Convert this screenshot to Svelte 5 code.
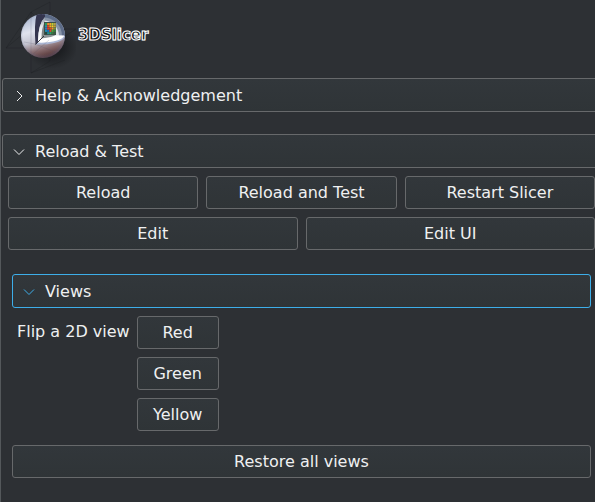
<script>
  let open = $state({ help: false, reload: true, views: true });
  const flips = ['Red', 'Green', 'Yellow'];
  const cells = [
    ['#2f9a58', '#f08a28', '#f6a423', '#b9cf35', '#b3a04a'],
    ['#2196a8', '#ef3e1c', '#f5b321', '#f7cf2c', '#c4a13a'],
    ['#3277c2', '#ee3b20', '#ec4a22', '#f49a25', '#7c9a3c'],
    ['#1b8fb0', '#1c6fc0', '#e4452a', '#54a53d', '#38813f'],
    ['#26483f', '#1e8f96', '#2aa36b', '#37803c', '#3d5a44']
  ];
</script>

{#snippet chevron(expanded)}
  <svg class="chevron" viewBox="0 0 12 12" aria-hidden="true">
    <path d={expanded ? 'M1 3.5L6 8.5L11 3.5' : 'M4 1L9 6L4 11'} />
  </svg>
{/snippet}

<main>
  <header>
    <svg class="logo" viewBox="0 0 76 76" aria-hidden="true">
      <defs>
        <linearGradient id="ball" x1="0.3" y1="0" x2="0.6" y2="1">
          <stop offset="0" stop-color="#a9b6d0" />
          <stop offset="0.35" stop-color="#e0e3ed" />
          <stop offset="0.58" stop-color="#c4c4d0" />
          <stop offset="0.8" stop-color="#84686b" />
          <stop offset="1" stop-color="#4c2a2b" />
        </linearGradient>
        <radialGradient id="edge" cx="0.48" cy="0.48" r="0.54">
          <stop offset="0.8" stop-color="#5c6c92" stop-opacity="0" />
          <stop offset="1" stop-color="#5c6c92" stop-opacity="0.4" />
        </radialGradient>
        <radialGradient id="shade">
          <stop offset="0.4" stop-color="#17191c" stop-opacity="0.75" />
          <stop offset="1" stop-color="#17191c" stop-opacity="0" />
        </radialGradient>
        <linearGradient id="side" x1="0" y1="0" x2="0" y2="1">
          <stop offset="0" stop-color="#8a94a0" />
          <stop offset="0.4" stop-color="#e8ebed" />
          <stop offset="1" stop-color="#ffffff" />
        </linearGradient>
      </defs>
      <ellipse cx="52" cy="47" rx="26" ry="22" fill="url(#shade)" />
      <path class="guide" d="M50 2V61L31 73V12L50 2M6 48L31 12M6 48H47L76 29H54M6 48L29 29M31 73L65 60M31 12L50 32" />
      <circle cx="43" cy="36" r="22" fill="url(#ball)" />
      <circle cx="43" cy="36" r="22" fill="url(#edge)" />
      <path d="M43 14A22 22 0 0 1 65 36H43Z" fill="#5d6c88" />
      <path d="M43 17.500A18.500 18.500 0 0 1 62 36H43Z" fill="#8794a8" />
      <path d="M43 20.500A15.500 15.500 0 0 1 59 36H43Z" fill="#dfe3e7" />
      <path d="M36.500 15Q40 13.500 45 14.500V17Q38.500 23 38 41.500L35.500 44.500Q34 24 36.500 15Z" fill="#34354e" />
      <path d="M45 17Q38 24 38 41.500L45 35Z" fill="url(#side)" />
      <path d="M45 22Q41.500 27 41.500 38.500L45 35Z" fill="#7e8584" />
      <path d="M35.500 44.500L45 35L65 36Q64.500 40.500 54 43Q46 45 35.500 44.500Z" fill="#aab6d4" />
      <path d="M37.500 42.500L45 35L64.500 35.500Q62 40 53 41.500Q46 43 37.500 42.500Z" fill="#ffffff" />
      <path d="M41.500 38.500L45 34.500H56Q54 36.500 48 37.500Z" fill="#8b9394" />
      <rect x="44" y="22" width="12" height="13" fill="#3d4f48" />
      {#each cells as row, r}
        {#each row as color, c}
          <rect x={45 + c * 2.2} y={23 + r * 2.3} width="2" height="2" fill={color} />
        {/each}
      {/each}
      <path class="cut" d="M35.500 44.500L44 36" />
      <path class="line" d="M31 16V56L49 40M24 42L35 44M35 44L55 52" />
    </svg>
    <span class="brand">3DSlicer</span>
  </header>

  <section class="wide">
    <button class="fold" aria-expanded={open.help} onclick={() => (open.help = !open.help)}>
      {@render chevron(open.help)}Help &amp; Acknowledgement
    </button>
  </section>

  <section class="wide">
    <button class="fold" aria-expanded={open.reload} onclick={() => (open.reload = !open.reload)}>
      {@render chevron(open.reload)}Reload &amp; Test
    </button>
    {#if open.reload}
      <div class="tools">
        <div class="row">
          <button>Reload</button>
          <button>Reload and Test</button>
          <button>Restart Slicer</button>
        </div>
        <div class="row">
          <button>Edit</button>
          <button>Edit UI</button>
        </div>
      </div>
    {/if}
  </section>

  <section class="views">
    <button class="fold active" aria-expanded={open.views} onclick={() => (open.views = !open.views)}>
      {@render chevron(open.views)}Views
    </button>
    {#if open.views}
      <div class="flip" role="group" aria-labelledby="flip-label">
        <span id="flip-label">Flip a 2D view</span>
        <div class="stack">
          {#each flips as name}
            <button>{name}</button>
          {/each}
        </div>
      </div>
    {/if}
  </section>

  <div class="restore">
    <button>Restore all views</button>
  </div>
</main>

<style>
  :global(body) {
    margin: 0;
    background: #2d3034;
  }
  main {
    box-sizing: border-box;
    min-height: 100vh;
    padding-left: 1px;
    padding-bottom: 24px;
    border-left: 1px solid #54585b;
    overflow: hidden;
    background: #2d3034;
    color: #eff0f1;
    font: 16px/20px 'DejaVu Sans', sans-serif;
  }
  header {
    display: flex;
    align-items: center;
    height: 76px;
    margin-bottom: 2px;
  }
  .logo {
    width: 76px;
    height: 76px;
    flex: none;
    margin-left: -2px;
  }
  .guide,
  .line {
    fill: none;
    stroke: #1c1f22;
    stroke-width: 0.7;
    opacity: 0.5;
  }
  .line {
    stroke: #454b60;
    opacity: 0.25;
  }
  .cut {
    stroke: #181b20;
    stroke-width: 0.8;
  }
  .brand {
    margin: 0 0 6px 2px;
    color: #111315;
    font-size: 15px;
    font-weight: 700;
    -webkit-text-stroke: 1px #ffffff;
    text-shadow: 0 0 1px #ffffff;
  }
  button {
    box-sizing: border-box;
    height: 33px;
    padding: 0 12px;
    border: 1px solid #67696b;
    border-radius: 3px;
    background: linear-gradient(#32373b, #2f3437);
    color: inherit;
    font: inherit;
  }
  .fold {
    display: flex;
    align-items: center;
    gap: 10px;
    width: 100%;
    height: 34px;
    padding: 2px 10px 0;
    text-align: left;
  }
  .chevron {
    width: 12px;
    height: 12px;
    flex: none;
    fill: none;
    stroke: currentColor;
    stroke-width: 1;
  }
  .active {
    border-color: #3daee9;
  }
  .active .chevron {
    color: #3daee9;
  }
  .wide {
    margin-bottom: 22px;
  }
  .wide .fold {
    width: calc(100% + 8px);
  }
  .tools {
    display: grid;
    gap: 8px;
    padding: 8px 0 0 6px;
  }
  .row {
    display: flex;
    gap: 8px;
  }
  .row button {
    flex: 1 1 0;
  }
  .views {
    margin: 24px 4px 0 10px;
  }
  .flip {
    display: flex;
    gap: 7px;
    padding: 8px 0 0 5px;
    line-height: 32px;
  }
  .stack {
    display: grid;
    gap: 8px;
    width: 82px;
  }
  .restore {
    display: grid;
    margin: 14px 4px 0 10px;
  }
</style>
